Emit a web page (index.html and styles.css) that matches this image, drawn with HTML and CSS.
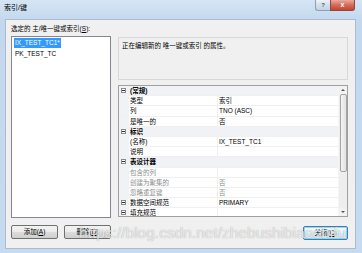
FILE: index.html
```html
<!DOCTYPE html>
<html lang="zh-CN">
<head>
    <meta charset="UTF-8">
    <title>索引/键</title>
    <link rel="stylesheet" href="styles.css">
</head>
<body>
    <div class="window">
        <div class="titlebar">
            <span class="title">索引/键</span>
            <div class="caption-btns">
                <span class="cap-help">?</span>
                <span class="cap-close">x</span>
            </div>
        </div>

        <div class="client">
            <div class="list-label">选定的 主/唯一键或索引(<u>S</u>):</div>

            <div class="listbox">
                <div class="item"><span class="sel">IX_TEST_TC1*</span></div>
                <div class="item"><span>PK_TEST_TC</span></div>
            </div>

            <div class="right">
                <div class="desc">正在编辑新的 唯一键或索引 的属性。</div>
                <div class="pg">
                    <div class="pg-rows">
                        <div class="row cat"><span class="gut"><i class="tog"></i></span><span class="name">(常规)</span></div>
                        <div class="row"><span class="gut"></span><span class="name">类型</span><span class="val">索引</span></div>
                        <div class="row"><span class="gut"></span><span class="name">列</span><span class="val">TNO (ASC)</span></div>
                        <div class="row"><span class="gut"></span><span class="name">是唯一的</span><span class="val">否</span></div>
                        <div class="row cat"><span class="gut"><i class="tog"></i></span><span class="name">标识</span></div>
                        <div class="row"><span class="gut"></span><span class="name">(名称)</span><span class="val">IX_TEST_TC1</span></div>
                        <div class="row"><span class="gut"></span><span class="name">说明</span><span class="val"></span></div>
                        <div class="row cat"><span class="gut"><i class="tog"></i></span><span class="name">表设计器</span></div>
                        <div class="row off"><span class="gut"></span><span class="name">包含的列</span><span class="val"></span></div>
                        <div class="row off"><span class="gut"></span><span class="name">创建为聚集的</span><span class="val">否</span></div>
                        <div class="row off"><span class="gut"></span><span class="name">忽略重复键</span><span class="val">否</span></div>
                        <div class="row sub"><span class="gut"><i class="tog"></i></span><span class="name">数据空间规范</span><span class="val">PRIMARY</span></div>
                        <div class="row sub"><span class="gut"><i class="tog"></i></span><span class="name">填充规范</span><span class="val"></span></div>
                    </div>
                    <div class="vscroll">
                        <span class="arrow up"></span>
                        <span class="thumb"></span>
                        <span class="track"></span>
                        <span class="arrow down"></span>
                    </div>
                </div>
            </div>

            <div class="left-buttons">
                <button class="btn">添加(<u>A</u>)</button>
                <button class="btn">删除(<u>D</u>)</button>
            </div>
            <div class="right-buttons">
                <button class="btn focused">关闭(<u>C</u>)</button>
            </div>
        </div>

        <div class="watermark">https://blog.csdn.net/zhebushibiaoshifu</div>
    </div>
</body>
</html>
```

FILE: styles.css
```css
body {
    margin: 0;
    font-family: "Liberation Sans", "Noto Sans CJK SC", sans-serif;
    font-size: 6.5px;
    color: #000;
}
.window {
    position: relative;
    width: 362px;
    height: 253px;
    overflow: hidden;
    background: linear-gradient(#d6e5f4, #c3d8ee 20px, #c6dbf0);
}
.titlebar {
    display: flex;
    justify-content: space-between;
    align-items: flex-start;
    height: 20px;
    padding: 0 7px 0 4px;
    box-sizing: border-box;
}
.title {
    padding-top: 4px;
    font-size: 7px;
    line-height: 8px;
}
.caption-btns {
    display: flex;
}
.cap-help, .cap-close {
    height: 11px;
    box-sizing: border-box;
    text-align: center;
    line-height: 10px;
}
.cap-help {
    width: 15px;
    border: 1px solid #8ca0b6;
    border-top: 0;
    border-right: 0;
    border-radius: 0 0 0 3px;
    background: linear-gradient(#eef3f9, #d3dfeb 50%, #c4d3e3);
    color: #4a5b6e;
    font-size: 6px;
    font-weight: bold;
}
.cap-close {
    width: 25px;
    border: 1px solid #8d4a40;
    border-top: 0;
    border-radius: 0 0 3px 0;
    background: linear-gradient(#e9a99c, #d66b5a 50%, #c5432f);
    color: #fff;
    font-size: 7px;
    font-weight: bold;
}
.client {
    display: grid;
    grid-template-columns: 100px 230px;
    grid-template-rows: 12px 182px auto;
    column-gap: 7px;
    width: 349px;
    height: 228px;
    margin-left: 6px;
    padding: 4px 7px 0 5px;
    box-sizing: border-box;
    background: #f0f0f0;
    box-shadow: 0 0 0 1px #a9bdd2;
}
.list-label {
    grid-column: 1 / 3;
    line-height: 9px;
}
.list-label u, .btn u {
    text-decoration-thickness: 0.5px;
}
.listbox {
    grid-column: 1;
    grid-row: 2;
    border: 1px solid #828790;
    background: #fff;
    padding: 1px 2px;
}
.item {
    height: 11px;
    line-height: 10px;
}
.item span {
    padding: 0 1px;
}
.item .sel {
    display: inline-block;
    background: #3399ff;
    color: #fff;
}
.right {
    grid-column: 2;
    grid-row: 2;
    display: flex;
    flex-direction: column;
    padding-top: 1px;
}
.desc {
    height: 43px;
    box-sizing: border-box;
    padding: 3px 3px;
    border: 1px solid #d8d8d8;
    line-height: 9px;
}
.pg {
    display: flex;
    height: 132px;
    margin-top: 5px;
    border: 1px solid #a0a0a0;
    background: #fff;
    box-sizing: border-box;
    overflow: hidden;
}
.pg-rows {
    flex: 1;
}
.row {
    display: grid;
    grid-template-columns: 10px 89px 1fr;
    height: 10.2px;
    line-height: 10px;
    box-sizing: border-box;
    border-bottom: 1px solid #f0f0f0;
    white-space: nowrap;
}
.gut {
    position: relative;
    background: #f0f2f5;
}
.name {
    padding-left: 1px;
    border-right: 1px solid #f0f0f0;
}
.val {
    padding-left: 1px;
}
.cat {
    background: #f0f2f5;
    font-weight: bold;
}
.cat .name {
    border-right: 0;
    grid-column: 2 / 4;
}
.off .name, .off .val {
    color: #8d8d8d;
}
.tog {
    position: absolute;
    left: 2px;
    top: 2px;
    width: 5px;
    height: 5px;
    border: 1px solid #8a8a8a;
    box-sizing: border-box;
    background: #fff;
}
.tog::after {
    content: "";
    position: absolute;
    left: 0;
    top: 1px;
    width: 3px;
    height: 1px;
    background: #333;
}
.vscroll {
    display: flex;
    flex-direction: column;
    width: 8px;
    background: #eeeeee;
    border-left: 1px solid #f4f4f4;
}
.arrow {
    position: relative;
    height: 8px;
    background: #f2f2f2;
}
.arrow::after {
    content: "";
    position: absolute;
    left: 2px;
    border-left: 2px solid transparent;
    border-right: 2px solid transparent;
}
.arrow.up::after {
    top: 3px;
    border-bottom: 2px solid #555;
}
.arrow.down::after {
    top: 3px;
    border-top: 2px solid #555;
}
.thumb {
    height: 76px;
    margin: 0 0.5px;
    border: 1px solid #a4a4a4;
    border-radius: 2px;
    background: linear-gradient(90deg, #f4f4f4, #e2e2e2);
}
.track {
    flex: 1;
}
.left-buttons {
    grid-column: 1;
    grid-row: 3;
    display: flex;
    justify-content: space-between;
    margin-top: 7px;
}
.right-buttons {
    grid-column: 2;
    grid-row: 3;
    display: flex;
    justify-content: flex-end;
    margin-top: 8px;
}
.btn {
    width: 47px;
    height: 14px;
    padding: 0;
    border: 1px solid #707070;
    border-radius: 2px;
    background: linear-gradient(#f2f2f2, #ebebeb 50%, #dddddd 50%, #cfcfcf);
    font-family: inherit;
    font-size: 6.5px;
    line-height: 12px;
    color: #000;
}
.btn.focused {
    width: 45px;
    border-color: #3c7fb1;
    box-shadow: inset 0 0 0 1px #8fd8f8;
    background: linear-gradient(#f4fafd, #e8f4fb 50%, #d8ecf8 50%, #cde6f6);
}
.watermark {
    position: absolute;
    left: 79px;
    top: 224px;
    font-size: 15.5px;
    line-height: 18px;
    white-space: nowrap;
    color: rgba(255, 255, 255, 0.75);
    text-shadow: 0 0 1px rgba(90, 90, 90, 0.6);
}
```
